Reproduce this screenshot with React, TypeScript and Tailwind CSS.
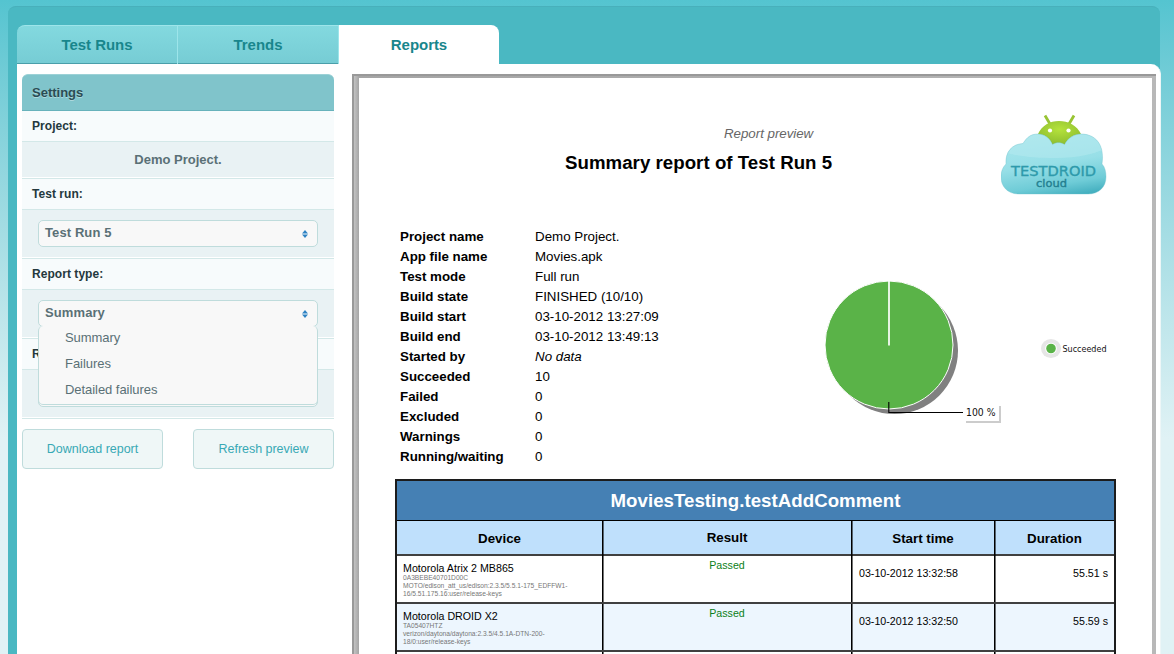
import React from "react";

const info: [string, string][] = [
  ["Project name", "Demo Project."],
  ["App file name", "Movies.apk"],
  ["Test mode", "Full run"],
  ["Build state", "FINISHED (10/10)"],
  ["Build start", "03-10-2012 13:27:09"],
  ["Build end", "03-10-2012 13:49:13"],
  ["Started by", "No data"],
  ["Succeeded", "10"],
  ["Failed", "0"],
  ["Excluded", "0"],
  ["Warnings", "0"],
  ["Running/waiting", "0"],
];

const devices = [
  {
    name: "Motorola Atrix 2 MB865",
    lines: ["0A3BEBE40701D00C", "MOTO/edison_att_us/edison:2.3.5/5.5.1-175_EDFFW1-", "16/5.51.175.16:user/release-keys"],
    start: "03-10-2012 13:32:58",
    duration: "55.51 s",
  },
  {
    name: "Motorola DROID X2",
    lines: ["TA05407HTZ", "verizon/daytona/daytona:2.3.5/4.5.1A-DTN-200-", "18/0:user/release-keys"],
    start: "03-10-2012 13:32:50",
    duration: "55.59 s",
  },
  { name: "", lines: [], start: "", duration: "" },
];

const columns = "grid grid-cols-[205px_249px_143px_120px]";

function Arrows() {
  return (
    <svg className="mt-[9px] h-[8px] w-[6px]" viewBox="0 0 6 8">
      <path d="M0 3.4 3 0l3 3.4ZM0 4.6 3 8l3-3.4Z" fill="#2f83c4" />
    </svg>
  );
}

function Select({ value }: { value: string }) {
  return (
    <div className="flex h-[27px] w-[280px] justify-between rounded-[5px] border border-[#bfdcdc] bg-[#f8f8f8] pr-[9px] pl-[6px]">
      <span className="text-[13px] leading-[24px] font-bold tracking-[0.1px] text-[#5a7076]">{value}</span>
      <Arrows />
    </div>
  );
}

function Label({ children }: { children: React.ReactNode }) {
  return (
    <div className="h-[31px] border-b border-[#d3e8e8] bg-[#f7fbfc] pl-[10px] text-[12px] leading-[30px] font-bold tracking-[0.05px] text-[#24383d]">
      {children}
    </div>
  );
}

function Field({ children }: { children: React.ReactNode }) {
  return (
    <div className="relative h-[49px] border-b border-[#d3e8e8] bg-[#e9f2f4] px-[16px] pt-[10px] shadow-[inset_0_-1px_0_#fff]">
      {children}
    </div>
  );
}

function Logo() {
  return (
    <svg className="mt-[35px] h-[84px] w-[108px] shrink-0" viewBox="0 0 108 84">
      <defs>
        <linearGradient id="cloud" x1="0.35" y1="0" x2="0.55" y2="1">
          <stop offset="0" stopColor="#b5ecf1" />
          <stop offset="0.6" stopColor="#97dfe7" />
          <stop offset="0.85" stopColor="#6fccd7" />
          <stop offset="1" stopColor="#45b0c0" />
        </linearGradient>
        <radialGradient id="droid" cx="0.5" cy="0.35" r="0.6">
          <stop offset="0" stopColor="#b5e23c" />
          <stop offset="1" stopColor="#8fbf30" />
        </radialGradient>
        <clipPath id="cloudclip">
          <path d="M18 81C6 81 0 73 0 64 0 58 2 54 5 51 4 39 11 31 22 30.500 26 24 30 21 37 21 43 21 49 25 51.500 31.500 55 29 60 29 63.500 31.500 67 25 73 21 80 21 94 21 104 31 101 51 104 54 105 59 105 64 105 74 98 81 87 81Z" />
        </clipPath>
      </defs>
      <path d="M44 2.500 49 11M73 2.500 68 11" stroke="#98c433" strokeWidth="2.800" strokeLinecap="butt" />
      <path d="M36.500 22C41 12 49 8 58 8S76 12 80.500 22C74 24 69 28 64 32H51C47 25 43 22 36.500 22Z" fill="url(#droid)" />
      <circle cx="49" cy="17.500" r="2.100" fill="#fff" />
      <circle cx="67.500" cy="17.500" r="2.100" fill="#fff" />
      <g clipPath="url(#cloudclip)">
        <rect width="108" height="84" fill="url(#cloud)" />
        <path d="M0 0H108V33C96 41 78 45 55 45 32 45 14 43 0 38Z" fill="#b4e9ef" opacity="0.55" />
      </g>
      <path d="M18 81C6 81 0 73 0 64 0 58 2 54 5 51 4 39 11 31 22 30.500 26 24 30 21 37 21 43 21 49 25 51.500 31.500 55 29 60 29 63.500 31.500 67 25 73 21 80 21 94 21 104 31 101 51 104 54 105 59 105 64 105 74 98 81 87 81Z" fill="none" stroke="#6cbfcb" strokeOpacity="0.45" strokeWidth="0.800" />
      <text x="10" y="63" textLength="85" lengthAdjust="spacingAndGlyphs" fontFamily="DejaVu Sans" fontSize="13.500" fill="#2e9aab" stroke="#2e9aab" strokeWidth="0.350">TESTDROID</text>
      <text x="35" y="74" textLength="31" lengthAdjust="spacingAndGlyphs" fontFamily="DejaVu Sans" fontSize="9.800" fill="#237f90" stroke="#237f90" strokeWidth="0.350">cloud</text>
    </svg>
  );
}

function Pie() {
  return (
    <svg className="h-[160px] w-[300px] shrink-0" viewBox="820 270 300 160">
      <circle cx="894.5" cy="350.500" r="63.500" fill="#808080" />
      <circle cx="889" cy="345" r="64" fill="#5ab348" stroke="#fff" />
      <path d="M889 281V345.500" stroke="#fff" strokeWidth="1.700" />
      <path d="M888.800 402V412.500H963" fill="none" stroke="#000" strokeWidth="1.100" />
      <path d="M966 422H1000V406" fill="none" stroke="#ccc" strokeWidth="2" />
      <text x="966" y="416" textLength="29.500" lengthAdjust="spacingAndGlyphs" fontFamily="DejaVu Sans" fontSize="9.800" fill="#111">100 %</text>
      <ellipse cx="1051" cy="348.500" rx="10" ry="9.500" fill="#e6e6e6" />
      <circle cx="1051" cy="348.500" r="5.800" fill="#fff" />
      <circle cx="1051" cy="348.500" r="4.800" fill="#5ab348" />
      <text x="1062.500" y="351.500" textLength="44" lengthAdjust="spacingAndGlyphs" fontFamily="DejaVu Sans" fontSize="8" fill="#111">Succeeded</text>
    </svg>
  );
}

function ResultsTable() {
  const cell = "border-l border-black shadow-[inset_1px_0_0_rgba(0,0,0,0.55)]";
  return (
    <div className="ml-[36px] w-[721px] border-t-2 border-r-2 border-l-2 border-[#1c1c1c]">
      <div className="h-[40px] border-b border-black bg-[#4580b4] text-center text-[18.67px] leading-[39px] font-bold tracking-[0.04px] text-white">
        MoviesTesting.testAddComment
      </div>
      <div className={`${columns} h-[35px] border-b-2 border-[#404040] bg-[#bfe0fc] text-center text-[13.33px] leading-[35px] font-bold`}>
        <div>Device</div>
        <div className={`${cell} leading-[33px]`}>Result</div>
        <div className={cell}>Start time</div>
        <div className={cell}>Duration</div>
      </div>
      {devices.map((d, i) => (
        <div key={i} className={`${columns} h-[48px] border-b-2 border-[#404040] text-[10.67px] ${i % 2 ? "bg-[#edf6fe]" : "bg-white"}`}>
          <div className="pt-[6px] pl-[6px] whitespace-nowrap">
            <div className="h-[12px] leading-[12px]">{d.name}</div>
            {d.lines.map((l) => (
              <div key={l} className="h-[8px] text-[6.67px] leading-[8px] text-[#777]">{l}</div>
            ))}
          </div>
          <div className={`${cell} pt-[3px] text-center leading-[12px] text-[#0b8020]`}>{d.name && "Passed"}</div>
          <div className={`${cell} pt-[11px] pl-[7px] leading-[12px]`}>{d.start}</div>
          <div className={`${cell} pt-[11px] pr-[6px] text-right leading-[12px]`}>{d.duration}</div>
        </div>
      ))}
    </div>
  );
}

export default function App() {
  const tab = "h-[39px] w-[161px] border-t border-r border-[#9de5ea] bg-linear-to-b from-[#83d9df] to-[#76ccd4] leading-[37px] shadow-[inset_0_-1px_0_#4a9faa]";
  return (
    <div className="h-[654px] w-[1174px] overflow-hidden bg-linear-to-b from-[#54c4d0] from-0% via-[#e0f2f5] via-[67%] to-[#e0f2f5] pt-[6px] pl-[8px] font-['Liberation_Sans',sans-serif]">
      <div className="h-[660px] w-[1152px] rounded-t-[8px] border-t border-[#48b0bb] bg-[#4ab8c2] pt-[18px] pl-[9px]">
        <div className="flex text-center text-[15px] leading-[39px] font-bold tracking-[-0.05px] text-[#18868c]">
          <div className={`${tab} rounded-tl-[8px]`}>Test Runs</div>
          <div className={tab}>Trends</div>
          <div className="h-[39px] w-[160px] rounded-tr-[8px] bg-white">Reports</div>
        </div>
        <div className="flex h-[600px] w-[1144px] rounded-tr-[10px] border-r border-[#edf6f7] bg-white pt-[10px] pl-[5px]">
          <aside className="w-[312px]">
            <div className="h-[37px] rounded-t-[6px] border-t border-b border-t-[#9cd1d6] border-b-[#67b2bb] bg-[#80c4cb] pl-[10px] text-[13px] leading-[35px] font-bold text-[#2b4c53] [text-shadow:0_1px_0_#add9dd]">
              Settings
            </div>
            <Label>Project:</Label>
            <div className="h-[37px] border-b border-[#d3e8e8] bg-[#e9f2f4] text-center text-[13px] leading-[35px] font-bold text-[#5a7076] shadow-[inset_0_-1px_0_#fff]">
              Demo Project.
            </div>
            <Label>Test run:</Label>
            <Field><Select value="Test Run 5" /></Field>
            <Label>Report type:</Label>
            <Field>
              <Select value="Summary" />
              <div className="absolute top-[36px] left-[16px] z-10 h-[79px] w-[280px] rounded-[5px] border-x border-b border-[#bfdcdc] bg-[#f8f8f8] pl-[26px] text-[13px] leading-[26px] tracking-[-0.05px] text-[#5a7076]">
                <div className="-mt-[1px]">Summary</div>
                <div>Failures</div>
                <div>Detailed failures</div>
              </div>
            </Field>
            <Label>Report:</Label>
            <Field><Select value="" /></Field>
            <div className="mt-[10px] flex justify-between text-center text-[12.5px] leading-[38px] tracking-[-0.03px] text-[#38a9b5]">
              <div className="h-[40px] w-[141px] rounded-[4px] border border-[#bfdcdc] bg-[#eff7f7]">Download report</div>
              <div className="h-[40px] w-[141px] rounded-[4px] border border-[#bfdcdc] bg-[#eff7f7]">Refresh preview</div>
            </div>
          </aside>
          <main className="ml-[18px] h-[600px] w-[804px] border-t-2 border-l-2 border-[#999] bg-linear-to-r from-[#c2c2c2] from-0% via-[#a5a5a5] via-[5px] to-[#b8b8b8] pt-[2px] pl-[5px]">
            <div className="h-[596px] w-[793px] bg-white text-black">
              <div className="flex h-[149px]">
                <div className="w-[642px]">
                  <div className="mt-[47px] ml-[365px] text-[13.33px] leading-[18px] tracking-[-0.03px] text-[#666] italic">Report preview</div>
                  <div className="mt-[8px] ml-[206px] text-[18.67px] leading-[24px] font-bold tracking-[0.04px] whitespace-nowrap">Summary report of Test Run 5</div>
                </div>
                <Logo />
              </div>
              <div className="flex h-[252px]">
                <div className="w-[461px] pl-[41px] text-[13.33px] leading-[20px]">
                  {info.map(([k, v]) => (
                    <div key={k} className="flex h-[20px]">
                      <div className="w-[135px] font-bold">{k}</div>
                      <div className={v === "No data" ? "italic" : ""}>{v}</div>
                    </div>
                  ))}
                </div>
                <div className="pt-[43px]"><Pie /></div>
              </div>
              <ResultsTable />
            </div>
          </main>
        </div>
      </div>
    </div>
  );
}
